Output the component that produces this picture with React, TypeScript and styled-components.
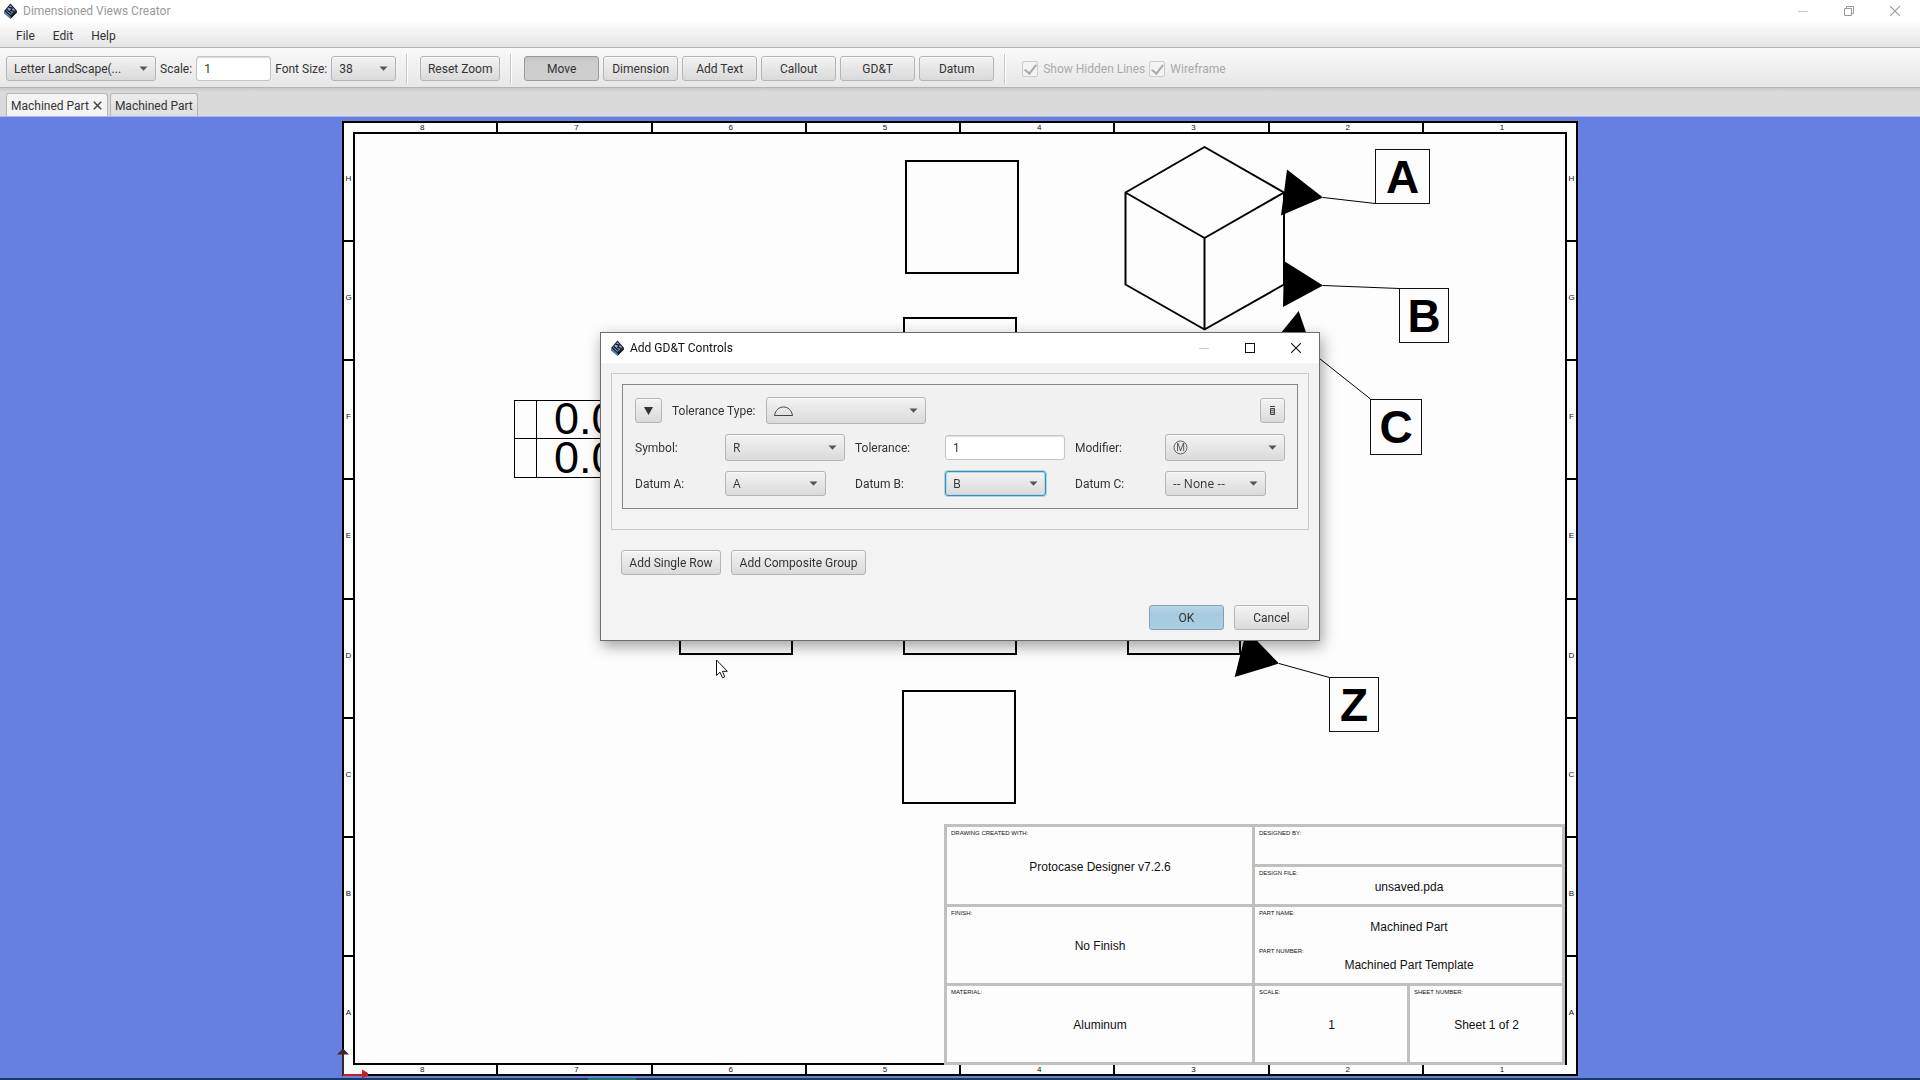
import React from "react";
import styled, { createGlobalStyle, css } from "styled-components";

const GlobalStyle = createGlobalStyle`
  * { box-sizing: border-box; }
  html, body, #root { height: 100%; }
  body {
    margin: 0;
    overflow: hidden;
    font-family: Roboto, "Open Sans", sans-serif;
    font-size: 12px;
    line-height: 16px;
    color: #333;
  }
  button, input, select { font: inherit; color: inherit; margin: 0; }
`;

const Page = styled.div`
  display: flex;
  flex-direction: column;
  height: 100vh;
  background: #6680e2;
`;

/* ---------- window chrome ---------- */

const Header = styled.header`
  background: linear-gradient(#fff 20px, #e4e4e4);
  border-bottom: 1px solid #b4b4b4;
`;

const TitleBar = styled.div<{ $dialog?: boolean }>`
  display: flex;
  align-items: center;
  gap: 5px;
  height: ${(p) => (p.$dialog ? 30 : 24)}px;
  padding: ${(p) => (p.$dialog ? "0 0 0 9px" : "0 2px 2px 3px")};
  color: ${(p) => (p.$dialog ? "#111" : "#999")};
  background: ${(p) => (p.$dialog ? "#fff" : "transparent")};
`;

const WindowTitle = styled.h1`
  flex: 1;
  margin: 0;
  font-size: 12px;
  font-weight: 400;
`;

const WindowButton = styled.button`
  display: grid;
  place-items: center;
  width: 46px;
  height: 20px;
  padding: 0;
  border: 0;
  background: none;
  color: ${(p) => (p.disabled ? "#ccc" : "inherit")};
`;

const WindowButtons = styled.div`
  display: flex;
`;

const MenuBar = styled.nav`
  display: flex;
  height: 23px;
  padding-left: 7px;
`;

const MenuItem = styled.button`
  padding: 0 9px;
  border: 0;
  background: none;
`;

const Toolbar = styled.div`
  display: flex;
  align-items: center;
  gap: 4px;
  height: 40px;
  padding: 2px 6px 0;
  background: linear-gradient(#fafafa, #e6e6e6);
  border-bottom: 1px solid #b4b4b4;
`;

const Separator = styled.hr`
  width: 2px;
  height: 30px;
  margin: 0 8px 0 6px;
  border: 0;
  border-left: 1px solid #c8c8c8;
  background: #fff;
`;

const raised = css`
  border: 1px solid #b5b5b5;
  border-radius: 3px;
  background: linear-gradient(#f3f3f3, #dadada);
  box-shadow: inset 0 1px 0 #fafafa;
`;

const Button = styled.button<{ $width?: number; $pressed?: boolean; $primary?: boolean }>`
  ${raised}
  height: 25px;
  padding: 0 7px;
  white-space: nowrap;
  ${(p) => p.$width && `width: ${p.$width}px; padding: 0;`}
  ${(p) =>
    p.$pressed &&
    `background: linear-gradient(#c2c2c2, #cecece 6px, #cecece);
     border-color: #999;
     box-shadow: none;`}
  ${(p) =>
    p.$primary &&
    `background: linear-gradient(#b9d7e6, #a6cadf 8px, #a9cde1);
     border-color: #8a9fab;
     box-shadow: none;`}
`;

const SelectBox = styled.span<{ $width: number; $tall?: boolean; $focused?: boolean }>`
  display: inline-grid;
  align-items: center;
  width: ${(p) => p.$width}px;
  height: ${(p) => (p.$tall ? 27 : 25)}px;

  & > * {
    grid-area: 1 / 1;
  }

  & > select {
    ${raised}
    appearance: none;
    width: 100%;
    height: 100%;
    padding: 0 28px 0 7px;
    outline: 0;
    text-overflow: ellipsis;
    ${(p) =>
      p.$focused &&
      `border-color: #3a90b4;
       box-shadow: 0 0 0 1px #a9d5e8, inset 0 0 0 1px #b5d8e6;`}
  }

  & > svg {
    justify-self: end;
    margin-right: 8px;
    pointer-events: none;
  }
`;

const SymbolGlyph = styled.svg`
  && {
    justify-self: start;
    margin-left: 8px;
  }
`;

const TextInput = styled.input<{ $width: number }>`
  width: ${(p) => p.$width}px;
  height: 25px;
  padding: 0 7px;
  border: 1px solid #c4c4c4;
  border-radius: 3px;
  background: #fff;
  box-shadow: inset 0 1px 1px #ddd;
  outline: 0;
`;

const ToolGroup = styled.div`
  display: flex;
  gap: 4px;
`;

const CheckLabel = styled.label`
  display: flex;
  align-items: center;
  gap: 5px;
  color: #aaa;
`;

const CheckBox = styled.input`
  appearance: none;
  display: grid;
  place-items: center;
  width: 16px;
  height: 16px;
  border: 1px solid #ccc;
  border-radius: 2px;
  background: #f3f3f3;

  &:checked::before {
    content: "";
    width: 5px;
    height: 10px;
    margin-bottom: 2px;
    border: solid #aaa;
    border-width: 0 2px 2px 0;
    transform: rotate(38deg);
  }
`;

const CheckGroup = styled.div`
  display: flex;
  gap: 4px;
  margin-left: 4px;
`;

const TabStrip = styled.div`
  display: flex;
  align-items: flex-end;
  gap: 2px;
  height: 29px;
  padding: 0 6px;
  background: linear-gradient(#c9c9c9, #dadada 4px, #dadada);
  border-bottom: 1px solid #a9b8e8;
`;

const Tab = styled.div<{ $active?: boolean }>`
  display: flex;
  align-items: center;
  gap: 4px;
  height: 23px;
  padding: 1px 4px 0;
  border: 1px solid #b5b5b5;
  border-bottom: 0;
  border-radius: 3px 3px 0 0;
  background: ${(p) => (p.$active ? "#f4f4f4" : "linear-gradient(#ececec, #dedede)")};
`;

const TabButton = styled.button`
  padding: 0;
  border: 0;
  background: none;
`;

const TabClose = styled(TabButton)`
  display: grid;
  padding-right: 1px;
`;

/* ---------- drawing sheet ---------- */

const Canvas = styled.main`
  display: flex;
  flex: 1;
  min-height: 0;
  justify-content: center;
  padding: 4px 0 2px;
`;

const Sheet = styled.section`
  display: grid;
  grid-template: 9px 1fr 9px / 9px 1fr 9px;
  height: 100%;
  aspect-ratio: 1236 / 955;
  border: 2px solid #000;
  background: #fdfdfd;
  font-family: "Liberation Sans", Arial, sans-serif;
  color: #111;
`;

const Ruler = styled.div<{ $vertical?: boolean; $end?: boolean }>`
  display: flex;
  flex-direction: ${(p) => (p.$vertical ? "column" : "row")};
  min-width: 0;
  min-height: 0;
  font-size: 8px;
  line-height: 9px;
  grid-area: ${(p) =>
    p.$vertical
      ? p.$end ? "1 / 3 / 4 / 4" : "1 / 1 / 4 / 2"
      : p.$end ? "3 / 1 / 4 / 4" : "1 / 1 / 2 / 4"};
`;

const RulerCell = styled.span<{ $vertical?: boolean }>`
  display: grid;
  flex: 1;
  place-items: center;
  padding: ${(p) => (p.$vertical ? "0 0 6px" : "0 0 0 4px")};
  border: 0 solid #000;

  &:not(:first-child) {
    border-width: ${(p) => (p.$vertical ? "2px 0 0 0" : "0 0 0 2px")};
  }
`;

const SheetInner = styled.div`
  grid-area: 2 / 2;
  display: flex;
  align-items: flex-end;
  justify-content: flex-end;
  border: 2px solid #000;
  min-height: 0;
`;

const DrawingLayer = styled.svg`
  grid-area: 1 / 1 / -1 / -1;
  width: 100%;
  height: 100%;
  min-height: 0;
  overflow: visible;
  font-family: "Liberation Sans", Arial, sans-serif;
`;

const TitleBlock = styled.dl`
  display: grid;
  grid-template: 37px 37px 76px 76px / 305fr 152fr 152fr;
  gap: 3px;
  width: 621px;
  margin: 0 0 -2px;
  padding: 3px;
  background: #c0c0c0;
  z-index: 1;
`;

const BlockCell = styled.div<{ $area: string }>`
  grid-area: ${(p) => p.$area};
  display: grid;
  background: #fdfdfd;
`;

const Field = styled.div`
  display: grid;

  & > * {
    grid-area: 1 / 1;
  }
`;

const FieldName = styled.dt`
  padding: 2px 4px;
  font-size: 6px;
  line-height: 8px;
`;

const FieldValue = styled.dd`
  place-self: center;
  margin: 0;
  padding: 2px 0 0 1px;
  font-size: 12px;
  line-height: 16px;
`;

const TaskBar = styled.footer`
  height: 2px;
  padding-left: 588px;
  background: #1b3a60;

  &::before {
    content: "";
    display: block;
    width: 48px;
    height: 2px;
    background: #13776c;
  }
`;

/* ---------- dialog ---------- */

const Overlay = styled.div`
  position: fixed;
  inset: 0;
  display: flex;
  align-items: flex-start;
  justify-content: center;
  padding-top: 332px;
`;

const Dialog = styled.section`
  width: 720px;
  border: 1px solid #6e6e6e;
  background: #f3f3f3;
  box-shadow: 2px 5px 14px rgba(0, 0, 0, 0.38);
`;

const DialogBody = styled.form`
  padding: 10px;
`;

const ListPanel = styled.div`
  padding: 10px 10px 20px;
  border: 1px solid #c8c8c8;
`;

const ControlPanel = styled.div`
  display: flex;
  flex-direction: column;
  gap: 10px;
  padding: 12px;
  border: 1px solid #858585;
  background: #f1f1f1;
`;

const TypeRow = styled.div`
  display: flex;
  align-items: center;
  gap: 10px;

  & > button:last-child {
    margin-left: auto;
  }
`;

const FieldGrid = styled.div`
  display: grid;
  grid-template-columns: repeat(3, 80px 1fr);
  align-items: center;
  gap: 10px;

  select {
    font-family: "Open Sans", "Noto Sans", sans-serif;
  }
`;

const IconButton = styled(Button)`
  display: grid;
  place-items: center;
`;

const RowButtons = styled.div`
  display: flex;
  gap: 10px;
  padding: 20px 10px 30px;
`;

const DialogActions = styled.div`
  display: flex;
  justify-content: flex-end;
  gap: 10px;
`;

const Pointer = styled.svg`
  position: fixed;
  left: 716px;
  top: 659px;
  pointer-events: none;
`;

/* ---------- pieces ---------- */

const Logo = () => (
  <svg width="15" height="16" viewBox="0 0 15 16" aria-hidden="true">
    <path d="M7.5 0.5 13.8 7.5 7.5 14 1 8Z" fill="#1a2436" />
    <path d="M1 8 7.5 13.5V16L1 10.5Z" fill="#4f7a9c" />
    <path d="M13.8 7.5 7.5 13.5V16L14 9.5Z" fill="#0c1016" />
    <path d="M7.5 2.2 12 7.2 7.4 11.8 3 7.6Z" fill="#9fb3d0" />
    <path d="M3.8 6.6 8.4 10.4M5.6 4.4 9.2 5 7.8 7.6 10.9 8.2" fill="none" stroke="#131c30" strokeWidth="1.4" />
  </svg>
);

const Minimize = () => (
  <svg width="10" height="10" aria-hidden="true"><path d="M0 5.5H10" stroke="currentColor" /></svg>
);
const Maximize = () => (
  <svg width="10" height="10" aria-hidden="true"><rect x="0.5" y="0.5" width="9" height="9" fill="none" stroke="currentColor" /></svg>
);
const Restore = () => (
  <svg width="10" height="10" aria-hidden="true">
    <path d="M0.5 2.5H7.5V9.5H0.5Z M2.5 2.5V0.5H9.5V7.5H7.5" fill="none" stroke="currentColor" />
  </svg>
);
const Close = () => (
  <svg width="10" height="10" aria-hidden="true"><path d="M0 0 10 10M10 0 0 10" stroke="currentColor" strokeWidth="1.1" /></svg>
);

type ComboProps = {
  id: string;
  value: string;
  width: number;
  tall?: boolean;
  focused?: boolean;
  name?: string;
  glyph?: React.ReactNode;
};

const Combo = ({ id, value, width, tall, focused, name, glyph }: ComboProps) => (
  <SelectBox $width={width} $tall={tall} $focused={focused}>
    <select id={id} aria-label={name}>
      <option>{value}</option>
    </select>
    {glyph}
    <svg width="9" height="5" aria-hidden="true"><path d="M0.5 0.5H8.5L4.5 4.8Z" fill="#555" /></svg>
  </SelectBox>
);

const columns = ["8", "7", "6", "5", "4", "3", "2", "1"];
const rows = ["H", "G", "F", "E", "D", "C", "B", "A"];

const SheetRuler = ({ vertical, end }: { vertical?: boolean; end?: boolean }) => (
  <Ruler $vertical={vertical} $end={end}>
    {(vertical ? rows : columns).map((t) => (
      <RulerCell key={t} $vertical={vertical}>{t}</RulerCell>
    ))}
  </Ruler>
);

const blocks: { area: string; fields: [string, string][] }[] = [
  { area: "1 / 1 / 3 / 2", fields: [["DRAWING CREATED WITH:", "Protocase Designer v7.2.6"]] },
  { area: "1 / 2 / 2 / 4", fields: [["DESIGNED BY:", ""]] },
  { area: "2 / 2 / 3 / 4", fields: [["DESIGN FILE:", "unsaved.pda"]] },
  { area: "3 / 1 / 4 / 2", fields: [["FINISH:", "No Finish"]] },
  { area: "3 / 2 / 4 / 4", fields: [["PART NAME:", "Machined Part"], ["PART NUMBER:", "Machined Part Template"]] },
  { area: "4 / 1 / 5 / 2", fields: [["MATERIAL:", "Aluminum"]] },
  { area: "4 / 2 / 5 / 3", fields: [["SCALE:", "1"]] },
  { area: "4 / 3 / 5 / 4", fields: [["SHEET NUMBER:", "Sheet 1 of 2"]] },
];

const datums = [
  { name: "A", x: 1375.5, y: 149.5, w: 54, h: 54, arrow: "1287,169.5 1323,197.5 1281,215.5", leader: "M1323 197.5 1375.5 203.5" },
  { name: "B", x: 1399.5, y: 288.5, w: 49, h: 54, arrow: "1284,261 1323,285.5 1283,307", leader: "M1323 285.5 1399.5 288.5" },
  { name: "C", x: 1370.5, y: 399.5, w: 51, h: 55, arrow: "1298.7,311 1312,350 1272,344", leader: "M1310 351 1370.5 399" },
  { name: "Z", x: 1329.5, y: 677.5, w: 49, h: 54, arrow: "1246.5,630 1279,663.5 1234.7,677", leader: "M1279 663.5 1329.5 677.5" },
];

const Drawing = () => (
  <DrawingLayer viewBox="344 123 1232 951" role="img" aria-label="Machined Part">
    <g fill="none" stroke="#000" strokeWidth="2">
      <rect x="906" y="161" width="112" height="112" />
      <rect x="904" y="318" width="112" height="112" />
      <rect x="680" y="542" width="112" height="112" />
      <rect x="904" y="542" width="112" height="112" />
      <rect x="1128" y="542" width="112" height="112" />
      <rect x="903" y="691" width="112" height="112" />
      <path strokeLinejoin="round" d="M1204.5 147 1284 192.5V284.5L1204.5 329.5 1125.5 284.5V192.5ZM1125.5 192.5 1204.5 238 1284 192.5M1204.5 238V329.5" />
    </g>
    <g fill="none" stroke="#000">
      <path d="M514.5 400.5H680M514.5 438.5H680M514.5 477.5H680M514.5 400V478M536.5 400V478" />
    </g>
    <g fontSize="45">
      <text x="554" y="434">0.0</text>
      <text x="554" y="473">0.0</text>
    </g>
    {datums.map((d) => (
      <g key={d.name}>
        <polygon points={d.arrow} />
        <path d={d.leader} stroke="#000" fill="none" />
        <rect x={d.x} y={d.y} width={d.w} height={d.h} fill="none" stroke="#111" />
        <text x={d.x + d.w / 2} y={d.y + 43} textAnchor="middle" fontSize="46" fontWeight="700">{d.name}</text>
      </g>
    ))}
    <path d="M343 1075V1053" stroke="#3a2424" strokeWidth="2" />
    <path d="M337 1054.5 343 1048.5 349 1054.5Z" fill="#3a2424" />
    <path d="M343 1075H363" stroke="#c8201c" strokeWidth="2" />
    <path d="M362 1069.5 368 1073V1076L362 1078Z" fill="#c8201c" />
  </DrawingLayer>
);

const tools = ["Move", "Dimension", "Add Text", "Callout", "GD&T", "Datum"];

export default function App() {
  return (
    <Page>
      <GlobalStyle />
      <Header>
        <TitleBar>
          <Logo />
          <WindowTitle>Dimensioned Views Creator</WindowTitle>
          <WindowButtons>
            <WindowButton aria-label="Minimize" disabled><Minimize /></WindowButton>
            <WindowButton aria-label="Restore"><Restore /></WindowButton>
            <WindowButton aria-label="Close"><Close /></WindowButton>
          </WindowButtons>
        </TitleBar>
        <MenuBar>
          <MenuItem>File</MenuItem>
          <MenuItem>Edit</MenuItem>
          <MenuItem>Help</MenuItem>
        </MenuBar>
      </Header>

      <Toolbar>
        <Combo id="page-size" name="Page size" value="Letter LandScape(..." width={150} />
        <label htmlFor="scale">Scale:</label>
        <TextInput id="scale" $width={75} defaultValue="1" />
        <label htmlFor="font-size">Font Size:</label>
        <Combo id="font-size" value="38" width={65} />
        <Separator />
        <Button $width={80}>Reset Zoom</Button>
        <Separator />
        <ToolGroup>
          {tools.map((t, i) => (
            <Button key={t} $width={75} $pressed={i === 0} aria-pressed={i === 0}>{t}</Button>
          ))}
        </ToolGroup>
        <Separator />
        <CheckGroup>
          <CheckLabel><CheckBox type="checkbox" defaultChecked disabled />Show Hidden Lines</CheckLabel>
          <CheckLabel><CheckBox type="checkbox" defaultChecked disabled />Wireframe</CheckLabel>
        </CheckGroup>
      </Toolbar>

      <TabStrip>
        <Tab $active>
          <TabButton>Machined Part</TabButton>
          <TabClose aria-label="Close tab">
            <svg width="9" height="9" aria-hidden="true"><path d="M0.8 0.8 8.2 8.2M8.2 0.8 0.8 8.2" stroke="#444" strokeWidth="1.5" /></svg>
          </TabClose>
        </Tab>
        <Tab><TabButton>Machined Part</TabButton></Tab>
      </TabStrip>

      <Canvas>
        <Sheet>
          <SheetRuler />
          <SheetRuler end />
          <SheetRuler vertical />
          <SheetRuler vertical end />
          <SheetInner>
            <TitleBlock>
              {blocks.map((b) => (
                <BlockCell key={b.area} $area={b.area}>
                  {b.fields.map(([name, value]) => (
                    <Field key={name}>
                      <FieldName>{name}</FieldName>
                      <FieldValue>{value}</FieldValue>
                    </Field>
                  ))}
                </BlockCell>
              ))}
            </TitleBlock>
          </SheetInner>
          <Drawing />
        </Sheet>
      </Canvas>
      <TaskBar />

      <Overlay>
        <Dialog role="dialog" aria-label="Add GD&T Controls">
          <TitleBar $dialog>
            <Logo />
            <WindowTitle as="h2">Add GD&amp;T Controls</WindowTitle>
            <WindowButtons>
              <WindowButton aria-label="Minimize" disabled><Minimize /></WindowButton>
              <WindowButton aria-label="Maximize"><Maximize /></WindowButton>
              <WindowButton aria-label="Close"><Close /></WindowButton>
            </WindowButtons>
          </TitleBar>
          <DialogBody onSubmit={(e) => e.preventDefault()}>
            <ListPanel>
              <ControlPanel>
                <TypeRow>
                  <IconButton type="button" $width={27} aria-label="Collapse">
                    <svg width="9" height="8" aria-hidden="true"><path d="M0 0H9L4.5 8Z" fill="#333" /></svg>
                  </IconButton>
                  <label htmlFor="tolerance-type">Tolerance Type:</label>
                  <Combo
                    id="tolerance-type"
                    value=""
                    width={160}
                    tall
                    glyph={
                      <SymbolGlyph width="19" height="10" aria-hidden="true">
                        <path d="M0.5 9.5H18.5C17.5 4 14 1 9.5 1S1.5 4 0.5 9.5Z" fill="none" stroke="#444" />
                      </SymbolGlyph>
                    }
                  />
                  <IconButton type="button" $width={25} aria-label="Delete">
                    <svg width="5" height="9" aria-hidden="true">
                      <path d="M0 0.5H5M0.5 2.5H4.5V8.5H0.5Z" fill="#bbb" stroke="#444" />
                      <path d="M1 4.5H4M1 6.5H4" stroke="#777" />
                    </svg>
                  </IconButton>
                </TypeRow>
                <FieldGrid>
                  <label htmlFor="symbol">Symbol:</label>
                  <Combo id="symbol" value="R" width={120} tall />
                  <label htmlFor="tolerance">Tolerance:</label>
                  <TextInput id="tolerance" $width={120} defaultValue="1" />
                  <label htmlFor="modifier">Modifier:</label>
                  <Combo
                    id="modifier"
                    value=""
                    width={120}
                    tall
                    glyph={
                      <SymbolGlyph width="15" height="15" aria-hidden="true">
                        <circle cx="7.5" cy="7.5" r="6.5" fill="none" stroke="#666" />
                        <text x="7.5" y="11" textAnchor="middle" fontSize="10" fill="#555">M</text>
                      </SymbolGlyph>
                    }
                  />
                  <label htmlFor="datum-a">Datum A:</label>
                  <Combo id="datum-a" value="A" width={101} />
                  <label htmlFor="datum-b">Datum B:</label>
                  <Combo id="datum-b" value="B" width={101} focused />
                  <label htmlFor="datum-c">Datum C:</label>
                  <Combo id="datum-c" value="-- None --" width={101} />
                </FieldGrid>
              </ControlPanel>
            </ListPanel>
            <RowButtons>
              <Button type="button" $width={100}>Add Single Row</Button>
              <Button type="button" $width={135}>Add Composite Group</Button>
            </RowButtons>
            <DialogActions>
              <Button type="submit" $width={75} $primary>OK</Button>
              <Button type="button" $width={75}>Cancel</Button>
            </DialogActions>
          </DialogBody>
        </Dialog>
      </Overlay>

      <Pointer width="13" height="20" aria-hidden="true">
        <path d="M0.5 1V16.5L4 13.2 6.5 18.8 8.8 17.8 6.4 12.3H11.3Z" fill="#fff" stroke="#111" />
      </Pointer>
    </Page>
  );
}
